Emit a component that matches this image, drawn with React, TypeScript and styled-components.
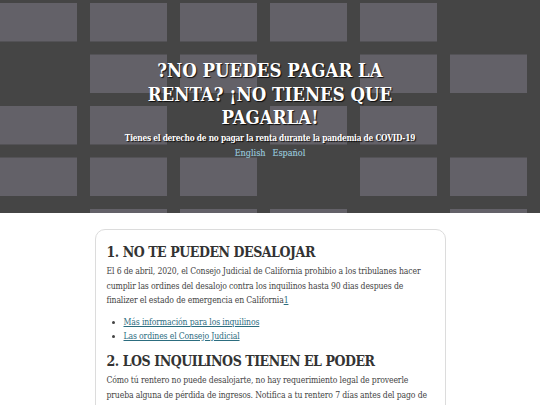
import React from 'react';
import styled, { createGlobalStyle } from 'styled-components';

const GlobalStyle = createGlobalStyle`
    html, body {
        margin: 0;
        padding: 0;
        background: #ffffff;
    }
    body {
        font-family: "DejaVu Serif Condensed", "DejaVu Serif", serif;
        color: #444;
    }
`;

const Hero = styled.header`
    position: relative;
    height: 213px;
    overflow: hidden;
    background: #454545;
`;

const Pattern = styled.svg`
    position: absolute;
    inset: 0;
    width: 100%;
    height: 100%;
`;

const HeroContent = styled.div`
    position: relative;
    display: flex;
    flex-direction: column;
    align-items: center;
    padding-top: 59px;
    text-align: center;
`;

const Title = styled.h1`
    margin: 0;
    width: 250px;
    font-size: 18.5px;
    line-height: 23.5px;
    font-weight: bold;
    color: #ffffff;
    text-shadow: 1px 1px 1px rgba(0, 0, 0, .85);
`;

const Subtitle = styled.p`
    margin: 3px 0 0;
    font-size: 8.3px;
    letter-spacing: -0.25px;
    font-weight: bold;
    color: #ffffff;
    text-shadow: 1px 1px 1px rgba(0, 0, 0, .85);
`;

const LangBar = styled.nav`
    display: flex;
    gap: 7px;
    margin-top: 5px;
`;

const LangLink = styled.a`
    font-size: 9px;
    color: #8ab5c5;
    text-decoration: none;
    text-shadow: 0 0 0.4px #8ab5c5;
`;

const Main = styled.main`
    padding: 16px 0 0;
`;

const Card = styled.section`
    width: 327px;
    margin: 0 auto;
    padding: 12px 11px 20px;
    border: 1px solid #dcdcdc;
    border-radius: 10px;
`;

const Heading = styled.h2`
    margin: 0;
    font-size: 14px;
    letter-spacing: -0.45px;
    line-height: 20px;
    font-weight: bold;
    color: #333;
`;

const Paragraph = styled.p`
    margin: 2px 0 0;
    font-size: 8.6px;
    letter-spacing: -0.14px;
    line-height: 14.6px;
    color: #444;
`;

const Link = styled.a`
    color: #2c6d7f;
    text-decoration: underline;
`;

const LinkList = styled.ul`
    margin: 8px 0 8px;
    padding-left: 17px;
    font-size: 8.6px;
    letter-spacing: -0.14px;
    line-height: 13.8px;
    color: #444;
`;

// which cells of the backdrop grid are lit, row by row
const grid = [
    [1, 1, 1, 1, 1, 0, 1],
    [0, 1, 1, 0, 1, 1, 0],
    [1, 1, 0, 1, 1, 0, 1],
    [1, 1, 1, 0, 1, 1, 0],
    [0, 1, 1, 1, 0, 1, 1],
];

const renderPattern = () => {
    const cells: React.ReactNode[] = [];
    grid.forEach((row, r) =>
        row.forEach((on, c) => {
            if (!on) return;
            cells.push(
                <rect key={`${r}-${c}`} x={c * 90} y={3 + r * 51.5} width={77} height={38.5} fill="#636168" />
            );
        })
    );
    return (
        <Pattern viewBox="0 0 540 213" preserveAspectRatio="xMinYMin slice">
            {cells}
        </Pattern>
    );
};

const App = () => {
    return (
        <>
            <GlobalStyle />
            <Hero>
                {renderPattern()}
                <HeroContent>
                    <Title>?NO PUEDES PAGAR LA RENTA? ¡NO TIENES QUE PAGARLA!</Title>
                    <Subtitle>Tienes el derecho de no pagar la renta durante la pandemia de COVID-19</Subtitle>
                    <LangBar>
                        <LangLink href="#">English</LangLink>
                        <LangLink href="#">Español</LangLink>
                    </LangBar>
                </HeroContent>
            </Hero>
            <Main>
                <Card>
                    <Heading>1. NO TE PUEDEN DESALOJAR</Heading>
                    <Paragraph>
                        El 6 de abril, 2020, el Consejo Judicial de California prohibio a los tribulanes hacer
                        cumplir las ordines del desalojo contra los inquilinos hasta 90 dias despues de
                        finalizer el estado de emergencia en California<Link href="#">1</Link>
                    </Paragraph>
                    <LinkList>
                        <li><Link href="#">Más información para los inquilinos</Link></li>
                        <li><Link href="#">Las ordines el Consejo Judicial</Link></li>
                    </LinkList>
                    <Heading>2. LOS INQUILINOS TIENEN EL PODER</Heading>
                    <Paragraph>
                        Cómo tú rentero no puede desalojarte, no hay requerimiento legal de proveerle
                        prueba alguna de pérdida de ingresos. Notifica a tu rentero 7 días antes del pago de
                        la renta que no pagarás la renta. Notifica a tu rentero por escrito y guarda una copia.
                    </Paragraph>
                </Card>
            </Main>
        </>
    );
};

export default App;
